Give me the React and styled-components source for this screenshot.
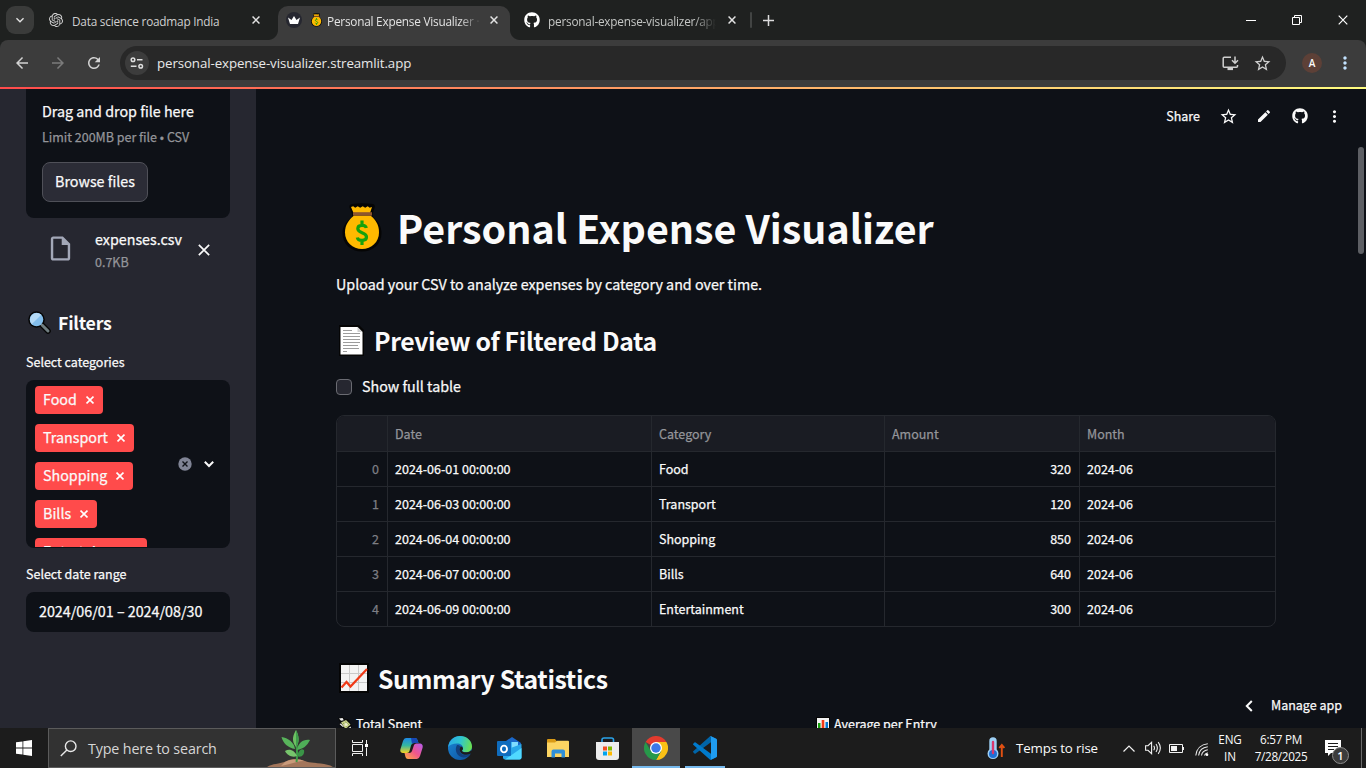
import React from "react";
import styled, { createGlobalStyle, css } from "styled-components";
import { MdStarBorder, MdEdit, MdMoreVert, MdArrowBack, MdArrowForward, MdRefresh, MdOutlineInsertDriveFile, MdKeyboardArrowDown } from "react-icons/md";
import { FaGithub } from "react-icons/fa";
import { SiOpenai } from "react-icons/si";

const sans = `"Noto Sans CJK JP", "Noto Sans", sans-serif`;
const ui = `"Open Sans", "Noto Sans", sans-serif`;

const GlobalStyle = createGlobalStyle`
  * { box-sizing: border-box; }
  html, body { margin: 0; padding: 0; background: #0e1117; overflow: hidden; }
  svg { display: block; flex: none; }
`;

const Screen = styled.div`
  width: 1366px;
  height: 768px;
  display: flex;
  flex-direction: column;
  overflow: hidden;
  white-space: nowrap;
`;

/* ---------- text ---------- */
const Label = styled.span`
  display: inline-block;
  font-family: ${(p) => (p.$ui ? ui : sans)};
  font-size: ${(p) => p.$size}px;
  font-weight: ${(p) => p.$weight || 400};
  line-height: ${(p) => p.$line || 20}px;
  letter-spacing: ${(p) => p.$track || 0}px;
  color: ${(p) => p.$color || "#fafafa"};
  ${(p) => !p.$ui && !p.$weight && css`-webkit-text-stroke: 0.25px currentColor;`}
  ${(p) => p.$lift && css`transform: translateY(-${p.$lift}px);`}
`;
const Body = styled(Label).attrs({ $size: 14.3, $line: 24, $lift: 1 })``;
const Small = styled(Label).attrs({ $size: 12.5 })``;

/* ---------- browser chrome ---------- */
const TabStrip = styled.div`
  height: 40px;
  flex: none;
  display: flex;
  align-items: center;
  background: #1f2120;
`;
const TabSearch = styled.div`
  width: 28px;
  height: 28px;
  margin-left: 6px;
  border-radius: 9px;
  background: #3a3b3a;
  display: grid;
  place-items: center;
`;
const Tab = styled.div`
  position: relative;
  align-self: flex-end;
  width: ${(p) => p.$width}px;
  height: 34px;
  padding: 0 ${(p) => p.$right}px 6px ${(p) => p.$left}px;
  display: flex;
  align-items: center;
  ${(p) => p.$active && css`
    background: #3c3c3c;
    border-radius: 10px 10px 0 0;
    &::before, &::after {
      content: "";
      position: absolute;
      bottom: 0;
      width: 10px;
      height: 10px;
    }
    &::before { left: -10px; background: radial-gradient(circle at 0 0, transparent 9.5px, #3c3c3c 10.5px); }
    &::after { right: -10px; background: radial-gradient(circle at 100% 0, transparent 9.5px, #3c3c3c 10.5px); }
  `}
`;
const TabTitle = styled(Label).attrs({ $ui: true, $size: 11.8, $track: -0.22 })`
  flex: 1;
  overflow: hidden;
  margin-left: ${(p) => p.$gap}px;
  margin-right: ${(p) => p.$after}px;
  padding-top: 1px;
  ${(p) => p.$fade && css`mask-image: linear-gradient(to right, #000 calc(100% - 22px), transparent);`}
`;
const Crown = styled.div`
  width: 16px;
  height: 16px;
  border-radius: 50%;
  background: #262730;
  display: grid;
  place-items: center;
  margin-right: 9px;
`;
const Divider = styled.div`
  width: 2px;
  height: 16px;
  margin: 0 11px 0 8px;
  border-radius: 1px;
  background: #424443;
`;
const WindowControls = styled.div`
  margin-left: auto;
  display: flex;
`;
const WindowButton = styled.div`
  width: 46px;
  height: 40px;
  display: grid;
  place-items: center;
`;
const Toolbar = styled.div`
  height: 47px;
  display: flex;
  align-items: center;
  padding: 0 0 1px 13px;
  background: #3c3c3c;
  border-top-left-radius: 8px;
  border-top-right-radius: 8px;
`;
const ToolbarBack = styled.div`
  background: #1f2120;
  flex: none;
`;
const NavButton = styled.div`
  width: 36px;
  display: flex;
  color: ${(p) => (p.$off ? "#7b7b7b" : "#d2d2d2")};
`;
const Omnibox = styled.div`
  width: 1166px;
  height: 34px;
  margin-left: -1px;
  border-radius: 17px;
  background: #282828;
  display: flex;
  align-items: center;
  padding: 0 14px 0 5px;
  color: #cfcfcf;
`;
const SiteInfo = styled.div`
  width: 24px;
  height: 24px;
  border-radius: 50%;
  background: #3c3c3c;
  display: grid;
  place-items: center;
  margin-right: 8px;
`;
const OmniActions = styled.div`
  margin-left: auto;
  display: flex;
  align-items: center;
  gap: 14px;
`;
const Avatar = styled.div`
  width: 20px;
  height: 20px;
  margin: 0 13px 0 16px;
  border-radius: 50%;
  background: #5d4037;
  display: grid;
  place-items: center;
`;
const Decoration = styled.div`
  height: 2px;
  flex: none;
  background: linear-gradient(90deg, #ff4b4b, #fffd80);
`;

/* ---------- page ---------- */
const Page = styled.div`
  position: relative;
  height: 639px;
  flex: none;
  display: flex;
  overflow: hidden;
  background: #0e1117;
`;
const Sidebar = styled.aside`
  width: 256px;
  flex: none;
  padding: 0 26px;
  background: #262730;
  display: flex;
  flex-direction: column;
`;
const Dropzone = styled.div`
  height: 129px;
  padding: 11px 16px 16px;
  border-radius: 0 0 8px 8px;
  background: #0e1117;
  display: flex;
  flex-direction: column;
  align-items: flex-start;
`;
const LimitNote = styled(Small)`
  margin-top: 4px;
`;
const BrowseButton = styled.div`
  width: 106px;
  height: 40px;
  margin-top: 14px;
  border: 1px solid #4f5058;
  border-radius: 8px;
  background: #2b2c36;
  display: grid;
  place-items: center;
`;
const FileRow = styled.div`
  height: 44px;
  margin-top: 10px;
  padding-left: 20px;
  display: flex;
  align-items: center;
`;
const FileIcon = styled.div`
  margin-bottom: 3px;
`;
const FileMeta = styled.div`
  width: 103px;
  margin-left: 20px;
  display: flex;
  flex-direction: column;
`;
const FilterHeading = styled.div`
  height: 28px;
  margin: 36px 0 16px 2px;
  display: flex;
  align-items: center;
  gap: 7px;
`;
const Select = styled.div`
  height: 168px;
  margin: 8px 0 16px;
  padding: 6px 9px 1px;
  border-radius: 8px;
  background: #0e1117;
  display: flex;
`;
const TagList = styled.div`
  width: 143px;
  display: flex;
  flex-direction: column;
  align-items: flex-start;
  gap: 10px;
  overflow: hidden;
`;
const Tag = styled.div`
  width: ${(p) => p.$width}px;
  height: 28px;
  flex: none;
  padding: 0 9px 0 8px;
  border-radius: 4px;
  background: #ff4b4b;
  display: flex;
  align-items: center;
  justify-content: space-between;
`;
const SelectControls = styled.div`
  display: flex;
  align-items: center;
  gap: 12px;
  margin-bottom: 5px;
`;
const DateInput = styled.div`
  height: 40px;
  margin-top: 8px;
  padding-left: 13px;
  border-radius: 8px;
  background: #0e1117;
  display: flex;
  align-items: center;
`;
const Main = styled.main`
  flex: 1;
  padding: 0 90px 0 80px;
`;
const PageHeader = styled.div`
  height: 54px;
  margin-right: -68px;
  display: flex;
  align-items: center;
  justify-content: flex-end;
  color: #fafafa;
`;
const HeaderItem = styled.div`
  width: ${(p) => p.$width}px;
  display: grid;
  place-items: center;
`;
const Heading = styled.div`
  height: ${(p) => p.$height}px;
  margin-top: ${(p) => p.$top}px;
  padding-left: ${(p) => p.$left}px;
  display: flex;
  align-items: center;
  gap: ${(p) => p.$gap}px;
`;
const SectionTitle = styled(Label).attrs({ $size: 24.8, $weight: 600, $line: 34, $track: -0.38 })``;
const Intro = styled.div`
  height: 24px;
  margin-top: 20px;
  display: flex;
`;
const CheckRow = styled.div`
  height: 24px;
  margin: 18px 0 16px;
  display: flex;
  align-items: center;
  gap: 10px;
`;
const Checkbox = styled.div`
  width: 16px;
  height: 16px;
  border: 1px solid #6a6b72;
  border-radius: 4px;
  background: #262730;
`;
const Table = styled.div`
  width: 940px;
  height: 212px;
  border: 1px solid #25282e;
  border-radius: 8px;
  overflow: hidden;
`;
const Row = styled.div`
  display: grid;
  grid-template-columns: 51px 264px 233px 195px 1fr;
  height: ${(p) => (p.$head ? 36 : 35)}px;
  background: ${(p) => (p.$head ? "#1a1c23" : "transparent")};
  border-bottom: 1px solid #25282e;
  &:last-child { border-bottom: 0; height: 34px; }
`;
const Cell = styled.div`
  padding: 0 8px 0 7px;
  border-right: 1px solid #25282e;
  display: flex;
  align-items: center;
  justify-content: ${(p) => (p.$right ? "flex-end" : "flex-start")};
  &:last-child { border-right: 0; }
`;
const Metrics = styled.div`
  margin-top: 19px;
  display: grid;
  grid-template-columns: 1fr 1fr;
  gap: 16px;
`;
const Metric = styled.div`
  height: 20px;
  padding-left: 2px;
  display: flex;
  align-items: center;
  gap: 4px;
`;
const ScrollThumb = styled.div`
  position: absolute;
  right: 2px;
  top: 58px;
  width: 6px;
  height: 107px;
  border-radius: 3px;
  background: #5d5f64;
`;
const ManageApp = styled.div`
  position: absolute;
  right: 0;
  bottom: 0;
  height: 45px;
  padding: 0 24px 0 8px;
  background: #0e1117;
  display: flex;
  align-items: center;
  gap: 18px;
`;

/* ---------- taskbar ---------- */
const Taskbar = styled.div`
  height: 40px;
  flex: none;
  display: flex;
  background: #1c1c1c;
`;
const TaskCell = styled.div`
  width: 48px;
  height: 40px;
  margin-right: ${(p) => p.$after || 0}px;
  display: grid;
  place-items: center;
  background-color: ${(p) => (p.$active ? "#494949" : "transparent")};
  ${(p) => p.$line && css`
    background-image: linear-gradient(#76b9ed, #76b9ed);
    background-repeat: no-repeat;
    background-size: ${p.$line}px 2px;
    background-position: center bottom;
  `}
`;
const SearchBox = styled.div`
  width: 288px;
  height: 40px;
  border: 1px solid #5b5b5b;
  background: #323232;
  display: flex;
  align-items: center;
  padding-left: 11px;
`;
const SearchHint = styled(Label)`
  margin: 1px 0 0 11px;
`;
const Plant = styled.div`
  margin-left: auto;
  align-self: flex-end;
`;
const Tray = styled.div`
  margin-left: auto;
  display: flex;
  align-items: center;
`;
const Stack = styled.div`
  width: ${(p) => p.$width}px;
  display: flex;
  flex-direction: column;
  align-items: center;
`;
const Slot = styled.div`
  width: ${(p) => p.$width}px;
  padding-top: ${(p) => p.$drop || 0}px;
  margin-right: ${(p) => p.$after || 0}px;
  display: grid;
  place-items: center;
`;
const DesktopPeek = styled.div`
  width: 5px;
  height: 40px;
  border-left: 1px solid #6a6a6a;
`;

/* ---------- drawings ---------- */
const X = ({ size = 8, w = 1.5, color = "#e3e3e3" }) => (
  <svg width={size} height={size} viewBox="0 0 10 10" stroke={color} strokeWidth={(w * 10) / size} fill="none"><path d="M.7 .7 9.3 9.3M9.3 .7.7 9.3" /></svg>
);
const MoneyBag = ({ width, height }) => (
  <svg width={width} height={height} viewBox="0 0 40 49">
    <path d="M10 1Q20-.6 31 1Q34 1.500 32 6.500L30.500 11V14C36 18 39.500 23 39.500 30C39.500 41 31 48.500 20 48.500S.5 41 .5 30C.5 23 4.500 18 10 14V11L8 6Q6 1.500 10 1Z" fill="#050505" />
    <path d="M9 4l2.200-.7 2 1.500 2.500-1.500 2.500 1.500 2.500-1.500 2.500 1.500 2.500-1.500 2 1.500 2.300-.8-2 6H11.500Z" fill="#ffb900" />
    <path d="M12 12.500H28.500C34 17 37 22 37 29.500C37 39 29.500 46 20 46S3 39 3 29.500C3 22 6.500 17 12 12.500Z" fill="#ffb900" />
    <path d="M11 9.200H30V12.600H11Z" fill="#8e562e" />
    <path d="M24.300 25C23.500 21.500 15.800 21.300 15.800 25.800C15.800 30.500 24.500 29 24.500 34C24.500 38.500 16 38.300 15.300 34.500M20 17.500V21.500M20 37.500V42" fill="none" stroke="#16a10c" strokeWidth="3.200" />
  </svg>
);
const PageIcon = () => (
  <svg width="25" height="31" viewBox="0 0 25 31">
    <path d="M0 0H20L25 5V31H0Z" fill="#050505" />
    <path d="M1.500 2H18.500L23.500 7V29.500H1.500Z" fill="#fff" />
    <path d="M18.500 2V7H23.500Z" fill="#d0d0d0" />
    <path d="M4 5.500H13M4 8.500H21M4 11.500H21M4 14.500H21M4 17.500H21M4 20.500H19M4 23.500H20M4 26.500H8" stroke="#9c9c9c" strokeWidth="1" />
  </svg>
);
const ChartUp = () => (
  <svg width="30" height="30" viewBox="0 0 30 30">
    <path d="M0 0H30V30H0Z" fill="#050505" />
    <path d="M2 2H28V28H2Z" fill="#f3f3f3" />
    <path d="M10.500 2V28M19.500 2V28M2 10.500H28M2 19.500H28" stroke="#c9c9c9" />
    <path d="M2.500 24.500 7.500 19 11.500 23.500 28 6" fill="none" stroke="#f03a17" strokeWidth="2.200" />
  </svg>
);
const Magnifier = () => (
  <svg width="23" height="23" viewBox="0 0 23 23">
    <path d="M13 13 20 20" stroke="#050505" strokeWidth="5.600" strokeLinecap="round" />
    <circle cx="8.500" cy="8.500" r="8.300" fill="#050505" />
    <path d="M14 14 20 20" stroke="#6f7d80" strokeWidth="3" strokeLinecap="round" />
    <circle cx="8.500" cy="8.500" r="6.800" fill="#83beec" />
    <path d="M3.700 13.300A6.800 6.800 0 0 1 13.300 3.700Z" fill="#b4daf7" />
  </svg>
);
const FlyingMoney = () => (
  <svg width="14" height="14" viewBox="0 0 14 14">
    <path d="M0 1 5 0 7 2 10 2 13.500 8 13.500 13.500 8 13.500 1 8 2 5Z" fill="#0a0a0a" />
    <path d="M3 5.500 8 3 12.500 7.500 7.500 12Z" fill="#c8d28a" />
    <path d="M1 1.500 4.500 1 5.800 3.300 3 3.800ZM9.500 11.500 13 9.500 12.500 13 10 13.500ZM1.500 7 3 6.500 6 10 4.500 9.800Z" fill="#f1f1f1" />
    <path d="M5 6 9.500 10M7 4.500 11.500 8.500" stroke="#8a9a55" strokeWidth=".8" />
    <circle cx="8" cy="7.500" r="1.600" fill="#eef0cf" />
  </svg>
);
const BarChart = () => (
  <svg width="14" height="14" viewBox="0 0 14 14">
    <path d="M0 0H14V14H0Z" fill="#050505" /><path d="M1 1H13V13H1Z" fill="#f3f3f3" />
    <path d="M2 6H4.500V13H2Z" fill="#16a10c" /><path d="M5.700 3H8.300V13H5.700Z" fill="#f03a17" /><path d="M9.500 5H12V13H9.500Z" fill="#0078d4" />
  </svg>
);
const SiteSettings = () => (
  <svg width="14" height="12" viewBox="0 0 14 12" fill="none" stroke="#dedede" strokeWidth="1.500">
    <circle cx="3" cy="2.700" r="1.800" /><path d="M7 2.700H12.500M.8 9.300H6.500" /><circle cx="10.700" cy="9.300" r="1.800" />
  </svg>
);
const Install = () => (
  <svg width="17" height="15" viewBox="0 0 17 15" fill="none" stroke="#cfcfcf" strokeWidth="1.500">
    <path d="M9 1.200H2.200Q1.200 1.200 1.200 2.200V10.300Q1.200 11.300 2.200 11.300H14.500Q15.500 11.300 15.500 10.300V9" />
    <path d="M13 .5V7M10 4.300 13 7.300 16 4.300" /><path d="M5.500 13H11" strokeWidth="2.200" />
  </svg>
);
const SearchGlass = () => (
  <svg width="17" height="17" viewBox="0 0 17 17" fill="none" stroke="#e8e8e8" strokeWidth="1.400"><circle cx="10.700" cy="6.200" r="5.300" /><path d="M6.900 10 .8 16.100" /></svg>
);
const Sprout = () => (
  <svg width="68" height="37" viewBox="0 0 68 37">
    <path d="M0 37C7 33 14 34 20 31C26 28 32 29 38 31C45 34 58 32 66 37Z" fill="#a3765b" />
    <path d="M18 32C24 29 32 29 37 31C30 31 24 34 14 36Z" fill="#c99b7b" />
    <path d="M29.500 32C31 24 29.500 16 29 8" stroke="#3c9a45" strokeWidth="2" fill="none" />
    <path d="M29 17C24 11 26 5 29 0C32 6 33 12 29 17Z" fill="#6cbf62" />
    <path d="M29 0C32 6 33 12 29 17Z" fill="#3e9c4b" />
    <path d="M28 19C21 18 16 13 14.500 7C21 8 27 12 28 19Z" fill="#58b45b" />
    <path d="M30 20C31 13 36 9 43 10C40 16 36 19 30 20Z" fill="#4fae58" />
    <path d="M30 26C25 28 20 25 18 21C23 18 28 21 30 26Z" fill="#77c56c" />
    <path d="M30 26C32 20 34 18 37 20C38 25 34 28 30 26Z" fill="#3a9447" />
  </svg>
);
const WindowsLogo = () => (
  <svg width="16" height="16" viewBox="0 0 16 16" fill="#fff"><path d="M0 2.300 6.500 1.400V7.600H0ZM7.300 1.300 16 0V7.600H7.300ZM0 8.400H6.500V14.600L0 13.700ZM7.300 8.400H16V16L7.300 14.700Z" /></svg>
);
const TaskView = () => (
  <svg width="17" height="16" viewBox="0 0 17 16" fill="none" stroke="#f0f0f0" strokeWidth="1">
    <path d="M.5 0V2.500H10.500V0M.5 16V13.500H10.500V16M.5 4.500H10.500V11.500H.5ZM14.500 0V4M14.500 7.500V16" /><path d="M13 4H16V7H13Z" fill="#fff" stroke="none" />
  </svg>
);
const Copilot = () => (
  <svg width="23" height="21" viewBox="0 0 23 21">
    <defs>
      <linearGradient id="cpA" x1="0" y1="0" x2="0" y2="1"><stop offset="0" stopColor="#1e88e5" /><stop offset=".5" stopColor="#35b8a0" /><stop offset="1" stopColor="#f5d323" /></linearGradient>
      <linearGradient id="cpB" x1="1" y1="0" x2="0" y2="1"><stop offset="0" stopColor="#b55cf0" /><stop offset=".5" stopColor="#f0568c" /><stop offset="1" stopColor="#ffb13d" /></linearGradient>
    </defs>
    <path d="M6 0H15Q17 0 17.500 2L18.500 5H14Q11.500 5 11 7.500L9.500 13Q9 15 7 15H3Q-.5 15 .5 11L3 3Q4 0 6 0Z" fill="url(#cpA)" />
    <path d="M11 0H15Q17 0 17.500 2L18.500 5H14Q12.500 5 12 6Z" fill="#1747b5" />
    <path d="M17 21H8Q6 21 5.500 19L4.500 15H9Q11.500 15 12 13L14 7Q14.500 5.500 16.500 5.500H20Q23.500 6 22.500 10L20 18Q19 21 17 21Z" fill="url(#cpB)" />
  </svg>
);
const Edge = () => (
  <svg width="24" height="24" viewBox="0 0 24 24">
    <defs>
      <linearGradient id="edA" x1="0" y1=".3" x2="1" y2=".5"><stop offset="0" stopColor="#2ba8e8" /><stop offset=".5" stopColor="#2fc6cf" /><stop offset="1" stopColor="#6be04f" /></linearGradient>
      <linearGradient id="edB" x1="0" y1="0" x2="1" y2="1"><stop offset="0" stopColor="#1b87d6" /><stop offset="1" stopColor="#0c4f9c" /></linearGradient>
    </defs>
    <circle cx="12" cy="12" r="12" fill="url(#edB)" />
    <path d="M.2 11C1 4.500 6 0 12 0C19 0 24 5 24 10.500C24 14 21.500 16.300 18 16.300C15.500 16.300 14 15.500 14 14.800C14 14.300 15 13.700 15 12C15 9.500 12.500 7.500 9 7.500C5 7.500 1.500 9 .2 11Z" fill="url(#edA)" />
    <path d="M9 9C6 14 9 21 15.500 21.500C18.500 21.500 21 20 22.500 18C18 20.500 12 19 11.500 14C11.400 12 12 11.500 12.800 10.600C12 9.500 10.500 9 9 9Z" fill="#123f7d" />
    <path d="M22.500 17.800C18 20 12 18.500 11.500 13.500C11.500 12 12.300 11 13 10.500C14.500 10.800 15 12 15 12.600C15 14 14 14.200 14 14.900C14.500 16 17 16.500 19 16.200C20.500 16 22 15.500 23 14.500L24 14.500V17Z" fill="#1c1c1c" />
  </svg>
);
const Outlook = () => (
  <svg width="25" height="23" viewBox="0 0 25 23">
    <path d="M6 6 15 0 24 6V12H6Z" fill="#1a67c9" /><path d="M9 5H21V14H9Z" fill="#3fb3f5" /><path d="M15 5H21V12L15 14Z" fill="#7fdcff" />
    <path d="M6 14 24.500 7V20.500Q24.500 22.500 22.500 22.500H8Q6 22.500 6 20.500Z" fill="#28a8ea" /><path d="M8 22.500 24.500 11V20.500Q24.500 22.500 22.500 22.500Z" fill="#50d9ff" />
    <path d="M1 4H13Q14 4 14 5V18Q14 19 13 19H1Q0 19 0 18V5Q0 4 1 4Z" fill="#0f6cbd" />
    <ellipse cx="7" cy="12" rx="3" ry="3.400" fill="none" stroke="#fff" strokeWidth="1.900" />
  </svg>
);
const Explorer = () => (
  <svg width="22" height="19" viewBox="0 0 22 19">
    <path d="M0 1Q0 0 1 0H8L10 2.500V4H0Z" fill="#d99a16" /><path d="M0 3.500H8L10 1.700H21Q22 1.700 22 2.700V18H0Z" fill="#fcd462" />
    <path d="M4.500 18.500V12.500Q4.500 10.500 6.500 10.500H16Q18 10.500 18 12.500V18.500H14.500V14.500H8V18.500Z" fill="#2f8fd8" />
  </svg>
);
const Store = () => (
  <svg width="23" height="23" viewBox="0 0 23 23">
    <path d="M6 6V2.800Q6 1 8 1H15.500Q17.500 1 17.500 2.800V6" fill="none" stroke="#2aa2e8" strokeWidth="1.600" />
    <path d="M0 5H23V20Q23 23 20 23H3Q0 23 0 20Z" fill="#ececec" />
    <path d="M7 9.500H11V13.500H7Z" fill="#f25022" /><path d="M12 9.500H16V13.500H12Z" fill="#7fba00" /><path d="M7 14.500H11V18.500H7Z" fill="#00a4ef" /><path d="M12 14.500H16V18.500H12Z" fill="#ffb900" />
  </svg>
);
const Chrome = () => (
  <svg width="24" height="24" viewBox="0 0 48 48">
    <path d="M24 24 3.200 12A24 24 0 0 1 44.800 12H24Z" fill="#e33b2e" /><path d="M24 12H44.800A24 24 0 0 1 24 48L34.400 30Z" fill="#fbc116" />
    <path d="M3.200 12A24 24 0 0 0 24 48L34.400 30 24 24 13.600 30Z" fill="#27994a" />
    <circle cx="24" cy="24" r="12" fill="#fff" /><circle cx="24" cy="24" r="9.500" fill="#3b78e7" />
  </svg>
);
const VsCode = () => (
  <svg width="24" height="24" viewBox="0 0 100 100">
    <path d="M96 11 75 1Q72 0 70 2L1 64Q-1 66 1 68L6 73Q8 75 11 73L96 10Z" fill="#0065a9" />
    <path d="M96 89 75 99Q72 100 70 98L1 36Q-1 34 1 32L6 27Q8 25 11 27L96 90Z" fill="#007acc" />
    <path d="M75 99Q72 100 70 98C73 100 75 99 75 95V5C75 1 73 0 70 2Q72 0 75 1L97 11Q100 12 100 16V84Q100 88 97 89Z" fill="#1f9cf0" />
  </svg>
);
const Thermometer = () => (
  <svg width="18" height="23" viewBox="0 0 18 23">
    <path d="M2.300 4A3.700 3.700 0 0 1 9.700 4V12.500A5.500 5.500 0 1 1 2.300 12.500Z" fill="#9ed0f5" /><circle cx="6" cy="17" r="4" fill="#1f6fd6" />
    <path d="M6 5V16" stroke="#d9376e" strokeWidth="2.400" strokeLinecap="round" />
    <path d="M14.800 20V8.500M12.300 11 14.800 8 17.300 11" stroke="#e25012" strokeWidth="1.900" fill="none" />
  </svg>
);
const Volume = () => (
  <svg width="17" height="14" viewBox="0 0 17 14" fill="none" stroke="#f2f2f2" strokeWidth="1.100">
    <path d="M.6 4.700H3L6.600 1.300V12.700L3 9.300H.6ZM8.700 4.800Q10.300 7 8.700 9.200M11 3Q13.700 7 11 11M13.200 1.200Q17.500 7 13.200 12.800" />
  </svg>
);
const Battery = () => (
  <svg width="16" height="9" viewBox="0 0 16 9"><path d="M.5.5H13.500V8.500H.5Z" fill="none" stroke="#f2f2f2" /><path d="M2 2H8V7H2ZM14 3H15V6H14Z" fill="#f2f2f2" /></svg>
);
const Wifi = () => (
  <svg width="14" height="13" viewBox="0 0 14 13" fill="none" stroke="#e8e8e8" strokeWidth="1.100">
    <path d="M.8 12.500C1.500 6 6 1.500 12.800 .8M3.600 12.500C4.200 7.500 7.500 4.500 12.800 3.800M6.500 12.500C7 9.500 9 7.500 12.800 6.800M9.500 12.500Q10 10.500 12.800 9.800" /><circle cx="12" cy="11.700" r="1.300" fill="#fff" stroke="none" />
  </svg>
);
const Notification = () => (
  <svg width="26" height="26" viewBox="0 0 26 26">
    <path d="M1 1H17V14H7L4 17V14H1Z" fill="#fff" /><path d="M4 4.500H14M4 7.500H14M4 10.500H10" stroke="#1c1c1c" strokeWidth="1" />
    <circle cx="16.500" cy="16.500" r="8" fill="#3c3c3c" stroke="#8c8c8c" />
    <text x="16.500" y="20.500" textAnchor="middle" fill="#fff" fontFamily="Open Sans" fontSize="11" fontWeight="600">1</text>
  </svg>
);

/* ---------- data ---------- */
const tags = [["Food", 68], ["Transport", 99], ["Shopping", 98], ["Bills", 62], ["Entertai...", 112]];
const rows = [
  ["0", "2024-06-01 00:00:00", "Food", "320", "2024-06"],
  ["1", "2024-06-03 00:00:00", "Transport", "120", "2024-06"],
  ["2", "2024-06-04 00:00:00", "Shopping", "850", "2024-06"],
  ["3", "2024-06-07 00:00:00", "Bills", "640", "2024-06"],
  ["4", "2024-06-09 00:00:00", "Entertainment", "300", "2024-06"],
];

function BrowserChrome() {
  return (
    <>
      <TabStrip>
        <TabSearch><MdKeyboardArrowDown size={16} color="#e3e3e3" /></TabSearch>
        <Tab $width={244} $left={15} $right={10}>
          <SiOpenai size={14} color="#d5d5d5" />
          <TabTitle $gap={9} $after={10} $color="#d0d0d0">Data science roadmap India</TabTitle>
          <Slot $width={24}><X /></Slot>
        </Tab>
        <Tab $active $width={232} $left={8} $right={12}>
          <Crown><svg width="12" height="8" viewBox="0 0 12 8"><path d="M0 1.500 3.500 4 6 0 8.500 4 12 1.500 10 8H2Z" fill="#fff" /></svg></Crown>
          <MoneyBag width={11} height={14} />
          <TabTitle $gap={5} $after={9} $fade $color="#e3e3e3">Personal Expense Visualizer · Streamlit</TabTitle>
          <X />
        </Tab>
        <Tab $width={232} $left={14} $right={6}>
          <FaGithub size={16} color="#fff" />
          <TabTitle $gap={8} $after={12} $fade $color="#c5c7c5">personal-expense-visualizer/app.py</TabTitle>
          <X />
        </Tab>
        <Divider />
        <svg width="11" height="11" viewBox="0 0 11 11" stroke="#dcdcdc" strokeWidth="1.500"><path d="M5.500 0V11M0 5.500H11" /></svg>
        <WindowControls>
          <WindowButton><svg width="10" height="1"><path d="M0 .5H10" stroke="#fff" /></svg></WindowButton>
          <WindowButton><svg width="10" height="10" fill="none" stroke="#fff"><path d="M.5 2.500H7.500V9.500H.5ZM2.500 2.500V.5H9.500V7.500H7.500" /></svg></WindowButton>
          <WindowButton><X size={10} w={1.2} color="#fff" /></WindowButton>
        </WindowControls>
      </TabStrip>
      <ToolbarBack>
        <Toolbar>
          <NavButton><MdArrowBack size={18} /></NavButton>
          <NavButton $off><MdArrowForward size={18} /></NavButton>
          <NavButton><MdRefresh size={18} /></NavButton>
          <Omnibox>
            <SiteInfo><SiteSettings /></SiteInfo>
            <Label $ui $size={13.3} $track={-0.1} $color="#e8e8e8">personal-expense-visualizer.streamlit.app</Label>
            <OmniActions><Install /><MdStarBorder size={19} /></OmniActions>
          </Omnibox>
          <Avatar><Label $ui $size={10} $weight={600} $line={12}>A</Label></Avatar>
          <MdMoreVert size={20} color="#c2e2ff" />
        </Toolbar>
      </ToolbarBack>
      <Decoration />
    </>
  );
}

function Filters() {
  return (
    <Sidebar>
      <Dropzone>
        <Body>Drag and drop file here</Body>
        <LimitNote $lift={1} $color="#94959a">Limit 200MB per file • CSV</LimitNote>
        <BrowseButton><Body>Browse files</Body></BrowseButton>
      </Dropzone>
      <FileRow>
        <FileIcon><MdOutlineInsertDriveFile size={29} color="#a3a8b8" /></FileIcon>
        <FileMeta>
          <Body>expenses.csv</Body>
          <Small $color="#94959a">0.7KB</Small>
        </FileMeta>
        <X size={12} w={1.7} color="#fafafa" />
      </FileRow>
      <FilterHeading><Magnifier /><Label $size={17.8} $weight={600} $line={28} $track={-0.25}>Filters</Label></FilterHeading>
      <Small>Select categories</Small>
      <Select>
        <TagList>
          {tags.map(([name, width]) => (
            <Tag key={name} $width={width}><Body>{name}</Body><X size={8} w={1.6} color="#fff" /></Tag>
          ))}
        </TagList>
        <SelectControls>
          <svg width="14" height="14" viewBox="0 0 14 14"><circle cx="7" cy="7" r="6.700" fill="#808495" /><path d="M4.500 4.500 9.500 9.500M9.500 4.500 4.500 9.500" stroke="#0e1117" strokeWidth="1.400" /></svg>
          <svg width="10" height="7" viewBox="0 0 10 7" fill="none" stroke="#fafafa" strokeWidth="2"><path d="M.8 .8 5 5 9.200 .8" /></svg>
        </SelectControls>
      </Select>
      <Small>Select date range</Small>
      <DateInput><Body>2024/06/01 – 2024/08/30</Body></DateInput>
    </Sidebar>
  );
}

function Dashboard() {
  return (
    <Main>
      <PageHeader>
        <Small>Share</Small>
        <HeaderItem $width={56}><MdStarBorder size={19} /></HeaderItem>
        <HeaderItem $width={16}><MdEdit size={16} /></HeaderItem>
        <HeaderItem $width={56}><FaGithub size={16} /></HeaderItem>
        <HeaderItem $width={12}><MdMoreVert size={19} style={{ margin: "0 -4px" }} /></HeaderItem>
        <HeaderItem $width={4} />
      </PageHeader>
      <Heading $height={52} $top={58} $left={6} $gap={15}>
        <MoneyBag width={40} height={49} />
        <Label $size={39.4} $weight={700} $line={52}>Personal Expense Visualizer</Label>
      </Heading>
      <Intro><Body>Upload your CSV to analyze expenses by category and over time.</Body></Intro>
      <Heading $height={34} $top={26} $left={3} $gap={10}>
        <PageIcon />
        <SectionTitle>Preview of Filtered Data</SectionTitle>
      </Heading>
      <CheckRow><Checkbox /><Body>Show full table</Body></CheckRow>
      <Table>
        <Row $head>
          {["", "Date", "Category", "Amount", "Month"].map((h) => (
            <Cell key={h}><Small $color="#94959a">{h}</Small></Cell>
          ))}
        </Row>
        {rows.map((r) => (
          <Row key={r[0]}>
            {r.map((v, i) => (
              <Cell key={i} $right={i === 0 || i === 3}><Small $color={i === 0 ? "#7d7e84" : "#fafafa"}>{v}</Small></Cell>
            ))}
          </Row>
        ))}
      </Table>
      <Heading $height={34} $top={34} $left={3} $gap={9}>
        <ChartUp />
        <SectionTitle>Summary Statistics</SectionTitle>
      </Heading>
      <Metrics>
        <Metric><FlyingMoney /><Small>Total Spent</Small></Metric>
        <Metric><BarChart /><Small>Average per Entry</Small></Metric>
      </Metrics>
    </Main>
  );
}

function WindowsTaskbar() {
  return (
    <Taskbar>
      <TaskCell><WindowsLogo /></TaskCell>
      <SearchBox>
        <SearchGlass />
        <SearchHint $ui $size={14.3} $track={-0.15} $color="#d6d6d6">Type here to search</SearchHint>
        <Plant><Sprout /></Plant>
      </SearchBox>
      <TaskCell $after={3}><TaskView /></TaskCell>
      <TaskCell $after={1}><Copilot /></TaskCell>
      <TaskCell $after={1}><Edge /></TaskCell>
      <TaskCell $after={1}><Outlook /></TaskCell>
      <TaskCell $after={1}><Explorer /></TaskCell>
      <TaskCell $after={1}><Store /></TaskCell>
      <TaskCell $active $line={48} $after={1}><Chrome /></TaskCell>
      <TaskCell $line={40}><VsCode /></TaskCell>
      <Tray>
        <Thermometer />
        <Slot $width={104} $after={8}><Label $ui $size={13.3} $track={-0.15}>Temps to rise</Label></Slot>
        <Slot $width={24}><svg width="12" height="7" fill="none" stroke="#f2f2f2" strokeWidth="1.200"><path d="M.5 6.500 6 1 11.500 6.500" /></svg></Slot>
        <Slot $width={24}><Volume /></Slot>
        <Slot $width={24}><Battery /></Slot>
        <Slot $width={26} $drop={2}><Wifi /></Slot>
        <Stack $width={30}><Label $ui $size={11.7} $line={17} $track={-0.1}>ENG</Label><Label $ui $size={11.7} $line={17}>IN</Label></Stack>
        <Stack $width={72}><Label $ui $size={11.7} $line={17} $track={-0.25}>6:57 PM</Label><Label $ui $size={11.7} $line={17} $track={-0.3}>7/28/2025</Label></Stack>
        <Slot $width={40} $drop={8} $after={4}><Notification /></Slot>
        <DesktopPeek />
      </Tray>
    </Taskbar>
  );
}

export default function App() {
  return (
    <Screen>
      <GlobalStyle />
      <BrowserChrome />
      <Page>
        <Filters />
        <Dashboard />
        <ScrollThumb />
        <ManageApp>
          <svg width="8" height="12" viewBox="0 0 8 12" fill="none" stroke="#fafafa" strokeWidth="2"><path d="M6.800 1 1.800 6 6.800 11" /></svg>
          <Small $lift={1}>Manage app</Small>
        </ManageApp>
      </Page>
      <WindowsTaskbar />
    </Screen>
  );
}
